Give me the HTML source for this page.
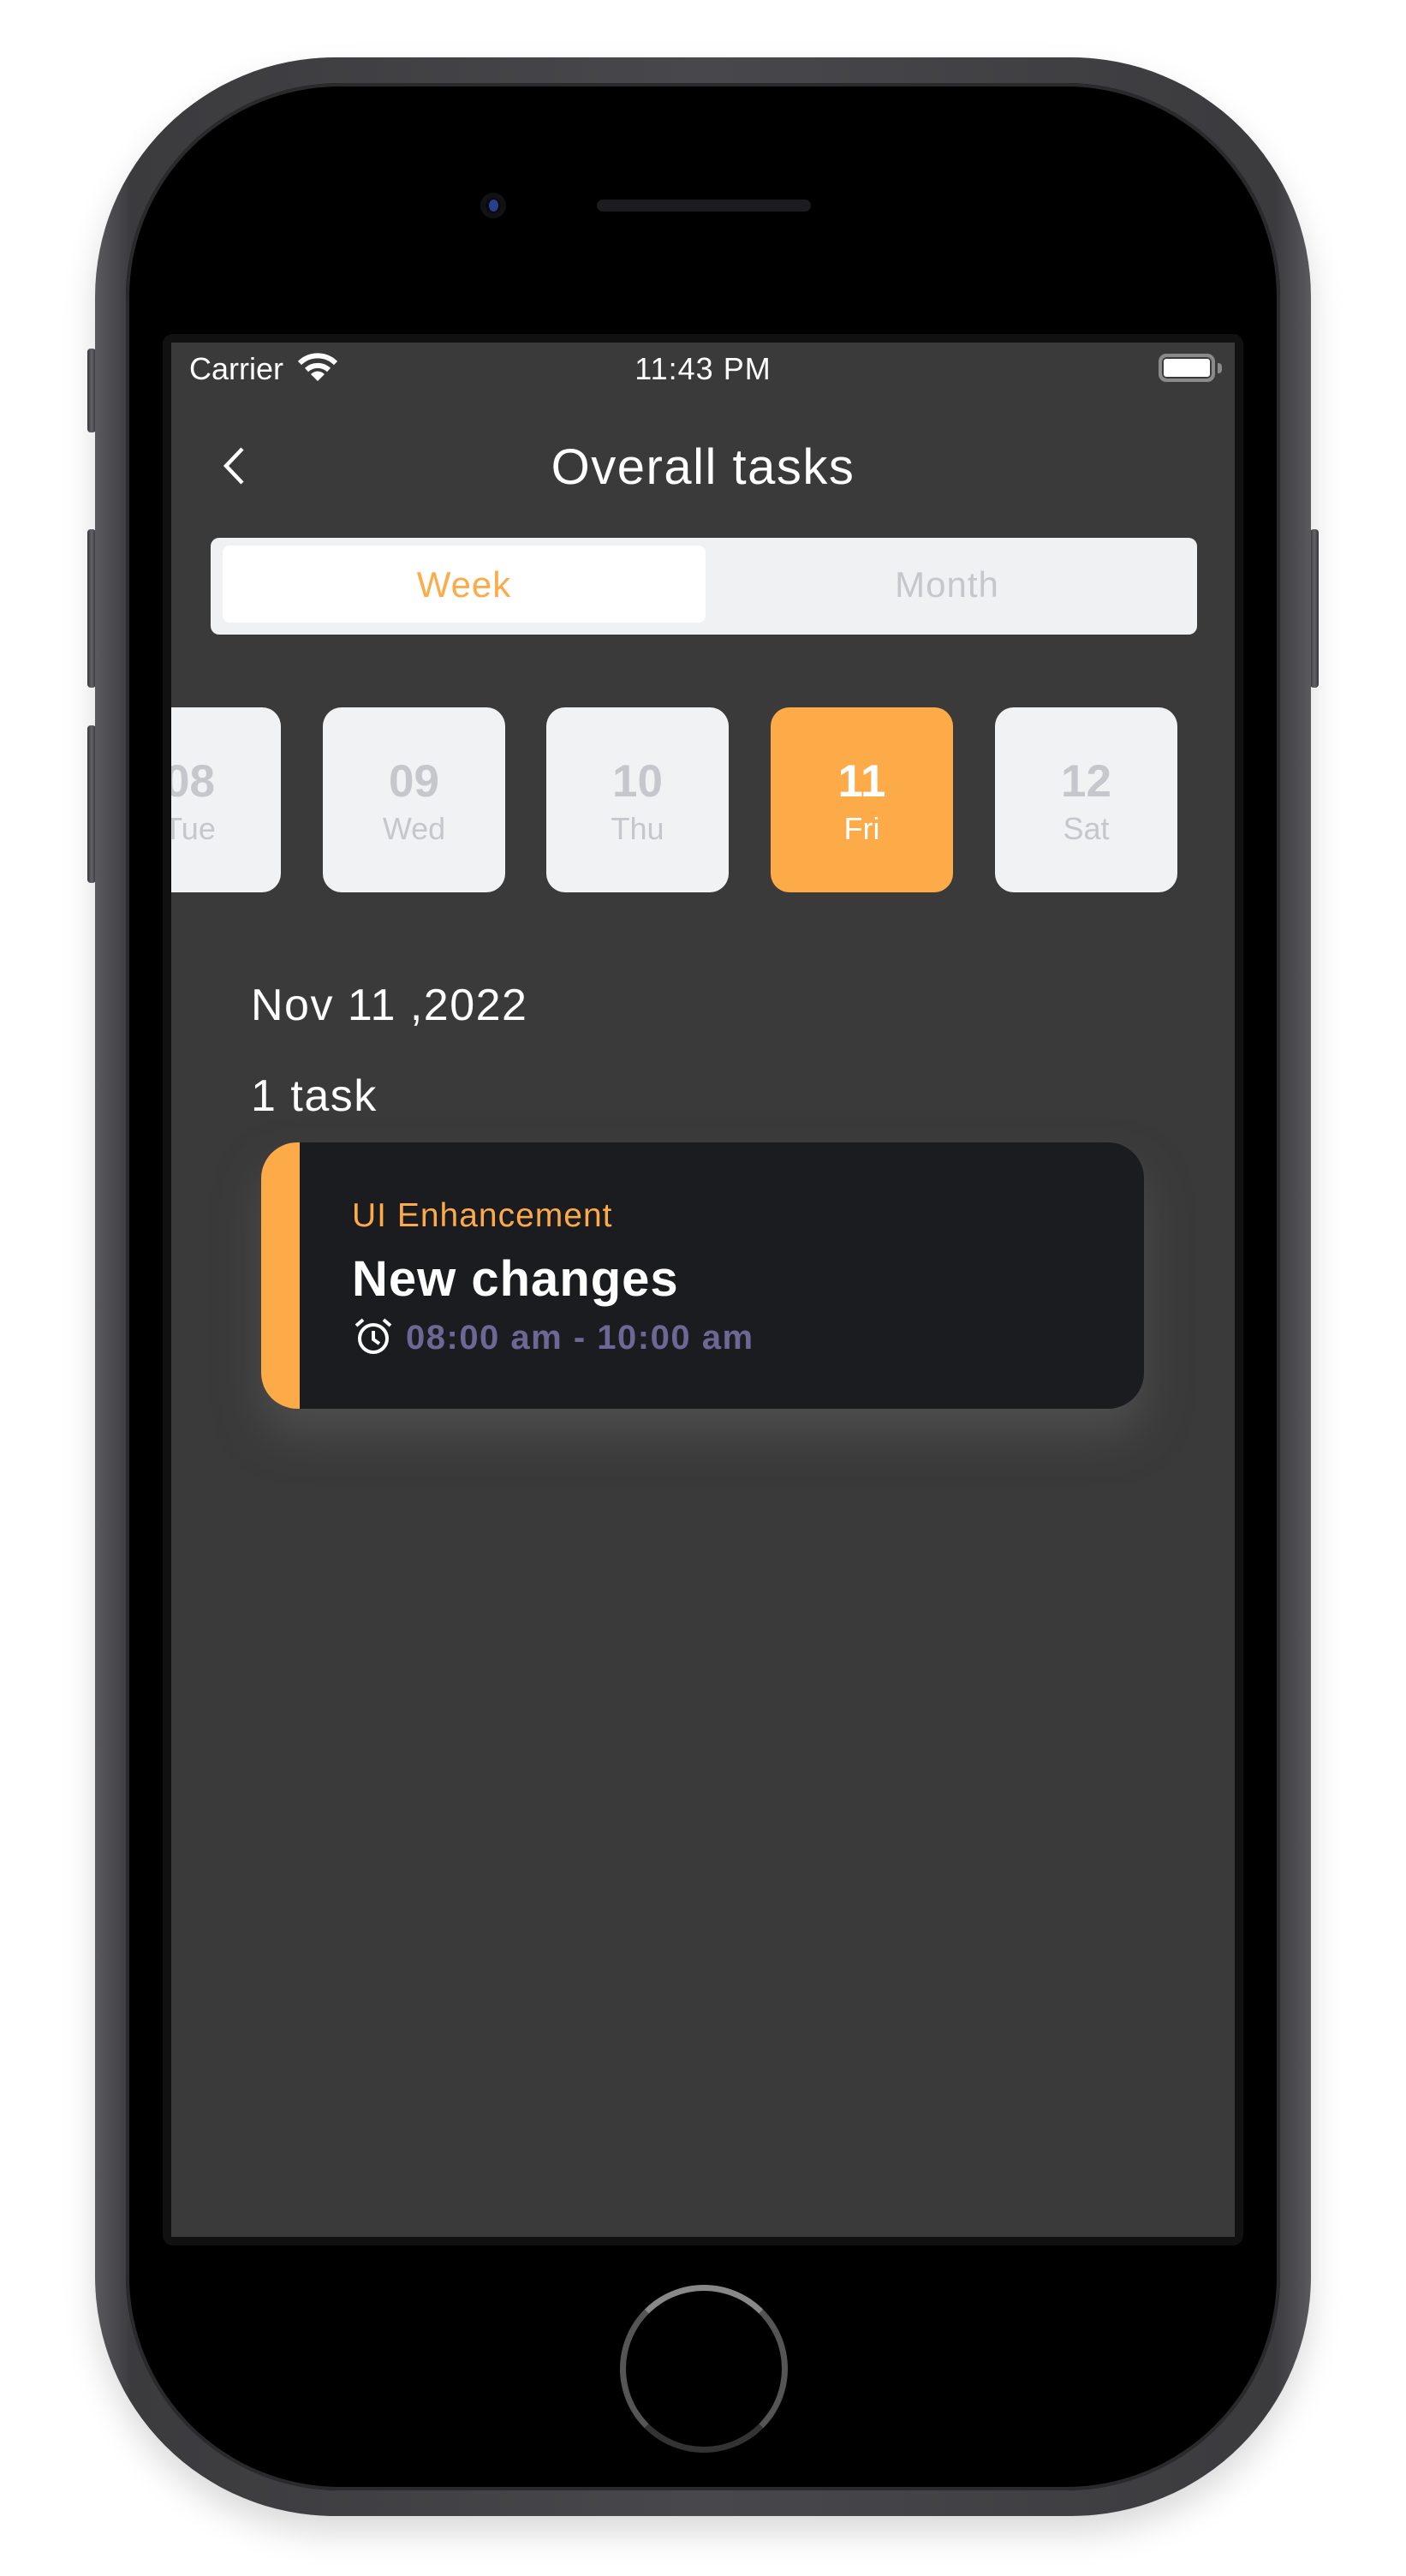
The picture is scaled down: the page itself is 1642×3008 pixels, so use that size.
<!DOCTYPE html>
<html><head><meta charset="utf-8"><style>
*{margin:0;padding:0;box-sizing:border-box}
body{width:1642px;height:3008px;background:#fff;position:relative;overflow:hidden;font-family:"Liberation Sans",sans-serif}
.abs{position:absolute}
.phone{left:111px;top:67px;width:1420px;height:2871px;border-radius:280px;background:linear-gradient(90deg,#5a5a5e,#3b3b3e 3%,#48484c 50%,#3b3b3e 97%,#5a5a5e);box-shadow:0 20px 40px rgba(0,0,0,.15)}
.face{left:36px;top:30px;right:36px;bottom:30px;border-radius:250px;background:#000;position:absolute;box-shadow:inset 0 0 0 4px #2a2a2c}
.btn{background:linear-gradient(90deg,#3a3a3e,#6a6a70,#3a3a3e);border-radius:4px}
.screenframe{left:190px;top:390px;width:1262px;height:2232px;background:#111;border-radius:12px}
.screen{left:200px;top:400px;width:1242px;height:2212px;background:#3a3a3a}
.t{position:absolute;white-space:nowrap}
.clip{position:absolute;left:200px;top:800px;width:1242px;height:280px;overflow:hidden}
.card{position:absolute;top:26px;width:213px;height:216px;border-radius:22px;background:#f1f2f4;text-align:center;color:#c5c7cc}
.card .n{position:absolute;left:0;right:0;top:60px;font-size:53px;font-weight:bold;line-height:1}
.card .d{position:absolute;left:0;right:0;top:124px;font-size:36px;line-height:1}
</style></head><body>
<div class="abs btn" style="left:102px;top:407px;width:10px;height:98px"></div>
<div class="abs btn" style="left:102px;top:618px;width:10px;height:185px"></div>
<div class="abs btn" style="left:102px;top:847px;width:10px;height:184px"></div>
<div class="abs btn" style="left:1530px;top:618px;width:10px;height:185px"></div>
<div class="abs phone"><div class="face"></div></div>
<div class="abs" style="left:561px;top:225px;width:30px;height:30px;border-radius:50%;background:#0a0a14;box-shadow:inset 0 0 0 6px #111"></div>
<div class="abs" style="left:571px;top:233px;width:11px;height:14px;border-radius:50%;background:#2a3f8a"></div>
<div class="abs" style="left:697px;top:233px;width:250px;height:14px;border-radius:7px;background:#1c1c1e"></div>
<div class="abs screenframe"></div>
<div class="abs screen"></div>
<div class="t" style="left:221px;top:410px;font-size:36px;color:#fff">Carrier</div>
<svg class="abs" style="left:348px;top:412px" width="46" height="34" viewBox="0 0 46 34"><path d="M2 12 A30 30 0 0 1 44 12" stroke="#fff" stroke-width="6" fill="none"/><path d="M10 20 A19 19 0 0 1 36 20" stroke="#fff" stroke-width="6" fill="none"/><path d="M15 25 L23 33 L31 25 A11 11 0 0 0 15 25Z" fill="#fff"/></svg>
<div class="t" style="left:0;width:1642px;text-align:center;top:410px;font-size:36px;color:#fff;letter-spacing:1px">11:43 PM</div>
<div class="abs" style="left:1353px;top:413px;width:66px;height:33px;border:4px solid #8a8a8a;border-radius:9px;background:#fff;box-shadow:inset 0 0 0 2px #3a3a3a"></div>
<div class="abs" style="left:1422px;top:424px;width:5px;height:12px;background:#8a8a8a;border-radius:0 4px 4px 0"></div>
<svg class="abs" style="left:256px;top:520px" width="32" height="48"><path d="M27 4 L8 24 L27 44" stroke="#fff" stroke-width="4.5" fill="none"/></svg>
<div class="t" style="left:0;width:1642px;text-align:center;top:512px;font-size:58px;color:#fff;letter-spacing:1.5px">Overall tasks</div>
<div class="abs" style="left:246px;top:628px;width:1152px;height:113px;background:#f0f1f3;border-radius:10px"></div>
<div class="abs" style="left:260px;top:637px;width:564px;height:90px;background:#fff;border-radius:8px"></div>
<div class="t" style="left:260px;width:564px;text-align:center;top:659px;font-size:42px;color:#fdab48;letter-spacing:1px">Week</div>
<div class="t" style="left:824px;width:564px;text-align:center;top:659px;font-size:42px;color:#c5c7cc;letter-spacing:1px">Month</div>
<div class="clip">
<div class="card" style="left:-85px;"><div class="n">08</div><div class="d">Tue</div></div>
<div class="card" style="left:177px"><div class="n">09</div><div class="d">Wed</div></div>
<div class="card" style="left:438px"><div class="n">10</div><div class="d">Thu</div></div>
<div class="card" style="left:700px;background:#fdab48;color:#fff"><div class="n">11</div><div class="d">Fri</div></div>
<div class="card" style="left:962px"><div class="n">12</div><div class="d">Sat</div></div>
</div>
<div class="t" style="left:293px;top:1144px;font-size:52px;color:#fff;letter-spacing:1.5px">Nov 11 ,2022</div>
<div class="t" style="left:293px;top:1250px;font-size:52px;color:#fff;letter-spacing:1.5px">1 task</div>
<div class="abs" style="left:305px;top:1334px;width:1031px;height:311px;border-radius:42px;background:#1b1c20;overflow:hidden;box-shadow:0 30px 50px rgba(90,90,90,.6)"><div style="width:45px;height:100%;background:#fdab48"></div></div>
<div class="t" style="left:411px;top:1398px;font-size:39px;color:#fdab48;letter-spacing:1px">UI Enhancement</div>
<div class="t" style="left:411px;top:1460px;font-size:58px;font-weight:bold;color:#fff;letter-spacing:1px">New changes</div>
<svg class="abs" style="left:413px;top:1538px" width="46" height="46" viewBox="0 0 46 46"><circle cx="23" cy="25" r="16" stroke="#fff" stroke-width="4" fill="none"/><path d="M23 16 V26 L30 31" stroke="#fff" stroke-width="4" fill="none"/><path d="M3 10 L11 3 M43 10 L35 3" stroke="#fff" stroke-width="4"/></svg>
<div class="t" style="left:474px;top:1540px;font-size:40px;font-weight:bold;color:#6b6896;letter-spacing:1.5px">08:00 am - 10:00 am</div>
<div class="abs" style="left:724px;top:2668px;width:196px;height:196px;border-radius:50%;border:7px solid #555;border-top-color:#888;border-bottom-color:#333"></div>
</body></html>
